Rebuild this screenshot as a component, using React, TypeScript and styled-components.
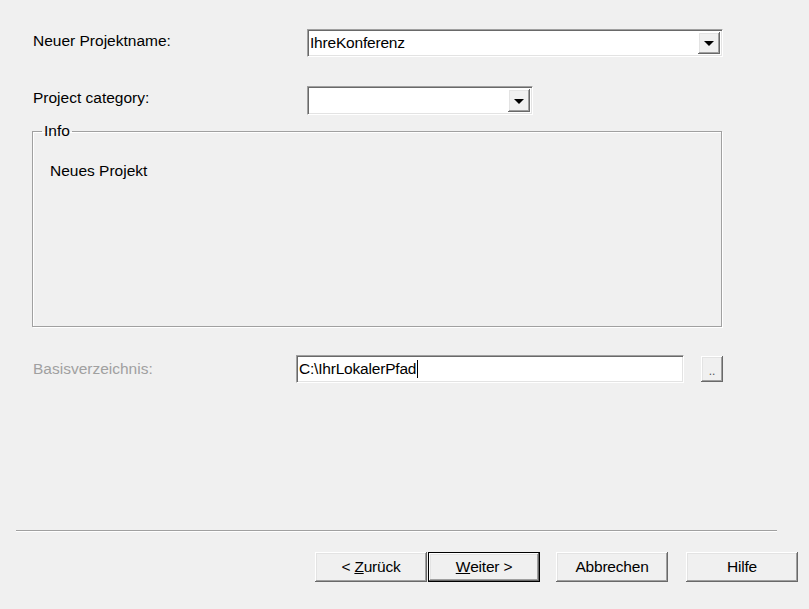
import React from "react";
import styled, { createGlobalStyle } from "styled-components";

const Global = createGlobalStyle`
  html, body {
    margin: 0;
    padding: 0;
    background: #f0f0f0;
  }
  body {
    font-family: "Liberation Sans", Arial, sans-serif;
    font-size: 15.5px;
    color: #000;
  }
`;

const Dialog = styled.div`
  width: 809px;
  height: 609px;
  box-sizing: border-box;
  padding-left: 33px;
  display: flex;
  flex-direction: column;
  overflow: hidden;
`;

const Row = styled.div<{ $top: number; $h: number; $cols: string }>`
  margin-top: ${(p) => p.$top}px;
  height: ${(p) => p.$h}px;
  display: grid;
  grid-template-columns: ${(p) => p.$cols};
  align-items: center;
`;

const Label = styled.div<{ $disabled?: boolean; $pad?: number }>`
  color: ${(p) => (p.$disabled ? "#a0a0a0" : "#000")};
  white-space: nowrap;
  align-self: start;
  padding-top: ${(p) => p.$pad ?? 3}px;
`;

const Sunken = styled.div<{ $h: number }>`
  height: ${(p) => p.$h}px;
  box-sizing: border-box;
  background: #fff;
  border: 1px solid;
  border-color: #a0a0a0 #fff #fff #a0a0a0;
  box-shadow: inset 1px 1px 0 #696969, inset -1px -1px 0 #e3e3e3;
  display: flex;
  align-items: stretch;
  padding: 2px;
`;

const FieldText = styled.div`
  flex: 1;
  display: flex;
  align-items: center;
  padding-left: 0;
  white-space: nowrap;
  letter-spacing: -0.2px;
`;

const DropButton = styled.div`
  width: 22px;
  background: #f0f0f0;
  box-shadow: inset -1px -1px 0 #696969, inset 1px 1px 0 #fff,
    inset -2px -2px 0 #a0a0a0, inset 2px 2px 0 #e3e3e3;
  display: flex;
  align-items: center;
  justify-content: center;
`;

const Arrow = styled.span`
  width: 0;
  height: 0;
  border-left: 5px solid transparent;
  border-right: 5px solid transparent;
  border-top: 5px solid #000;
  margin-top: 1px;
`;

const GroupBox = styled.fieldset`
  margin: 7px 0 0 -1px;
  width: 690px;
  height: 205px;
  box-sizing: border-box;
  border: 1px solid;
  border-color: #a0a0a0;
  box-shadow: 1px 1px 0 #fff, inset 1px 1px 0 #fff;
  padding: 22px 17px 0 17px;
  min-width: 0;
`;

const Legend = styled.legend`
  margin-left: -8px;
  padding: 0 2px;
  line-height: 18px;
`;

const InfoText = styled.div``;

const Caret = styled.span`
  display: inline-block;
  width: 1px;
  height: 18px;
  background: #000;
  margin-left: 1px;
`;

const SmallButton = styled.div`
  width: 22px;
  height: 26px;
  justify-self: end;
  background: #f0f0f0;
  box-shadow: inset -1px -1px 0 #696969, inset 1px 1px 0 #fff,
    inset -2px -2px 0 #a0a0a0, inset 2px 2px 0 #e3e3e3;
  display: flex;
  align-items: flex-end;
  justify-content: center;
  padding-bottom: 5px;
  box-sizing: border-box;
  font-size: 12px;
  color: #555;
  line-height: 1;
`;

const Separator = styled.div`
  margin: 147px 0 0 -17px;
  width: 761px;
  height: 0;
  border-top: 1px solid #a0a0a0;
  border-bottom: 1px solid #fff;
`;

const ButtonBar = styled.div`
  margin: 20px 0 0 282px;
  display: flex;
  gap: 16px;
`;

const Group = styled.div`
  display: flex;
  gap: 1px;
`;

const Button = styled.div<{ $default?: boolean; $shift?: number }>`
  width: 112px;
  height: 30px;
  margin-left: ${(p) => p.$shift ?? 0}px;
  box-sizing: border-box;
  background: #f0f0f0;
  display: flex;
  align-items: center;
  justify-content: center;
  letter-spacing: -0.2px;
  border: ${(p) => (p.$default ? "1px solid #000" : "none")};
  box-shadow: inset -1px -1px 0 #696969, inset 1px 1px 0 #fff,
    inset -2px -2px 0 #a0a0a0, inset 2px 2px 0 #e3e3e3;
`;

const Spacer = styled.div<{ $w: number }>`
  width: ${(p) => p.$w}px;
`;

export default function App() {
  return (
    <>
      <Global />
      <Dialog>
        <Row $top={29} $h={28} $cols="274px 416px">
          <Label>Neuer Projektname:</Label>
          <Sunken $h={28}>
            <FieldText>IhreKonferenz</FieldText>
            <DropButton>
              <Arrow />
            </DropButton>
          </Sunken>
        </Row>
        <Row $top={29} $h={29} $cols="274px 226px">
          <Label>Project category:</Label>
          <Sunken $h={29}>
            <FieldText />
            <DropButton>
              <Arrow />
            </DropButton>
          </Sunken>
        </Row>
        <GroupBox>
          <Legend>Info</Legend>
          <InfoText>Neues Projekt</InfoText>
        </GroupBox>
        <Row $top={28} $h={28} $cols="263px 388px 17px 22px">
          <Label $disabled $pad={5}>
            Basisverzeichnis:
          </Label>
          <Sunken $h={28}>
            <FieldText>
              C:\IhrLokalerPfad
              <Caret />
            </FieldText>
          </Sunken>
          <Spacer $w={17} />
          <SmallButton>..</SmallButton>
        </Row>
        <Separator />
        <ButtonBar>
          <Group>
            <Button>
              &lt;&nbsp;<u>Z</u>urück
            </Button>
            <Button $default>
              <u>W</u>eiter &gt;
            </Button>
          </Group>
          <Button>Abbrechen</Button>
          <Button $shift={2}>Hilfe</Button>
        </ButtonBar>
      </Dialog>
    </>
  );
}
